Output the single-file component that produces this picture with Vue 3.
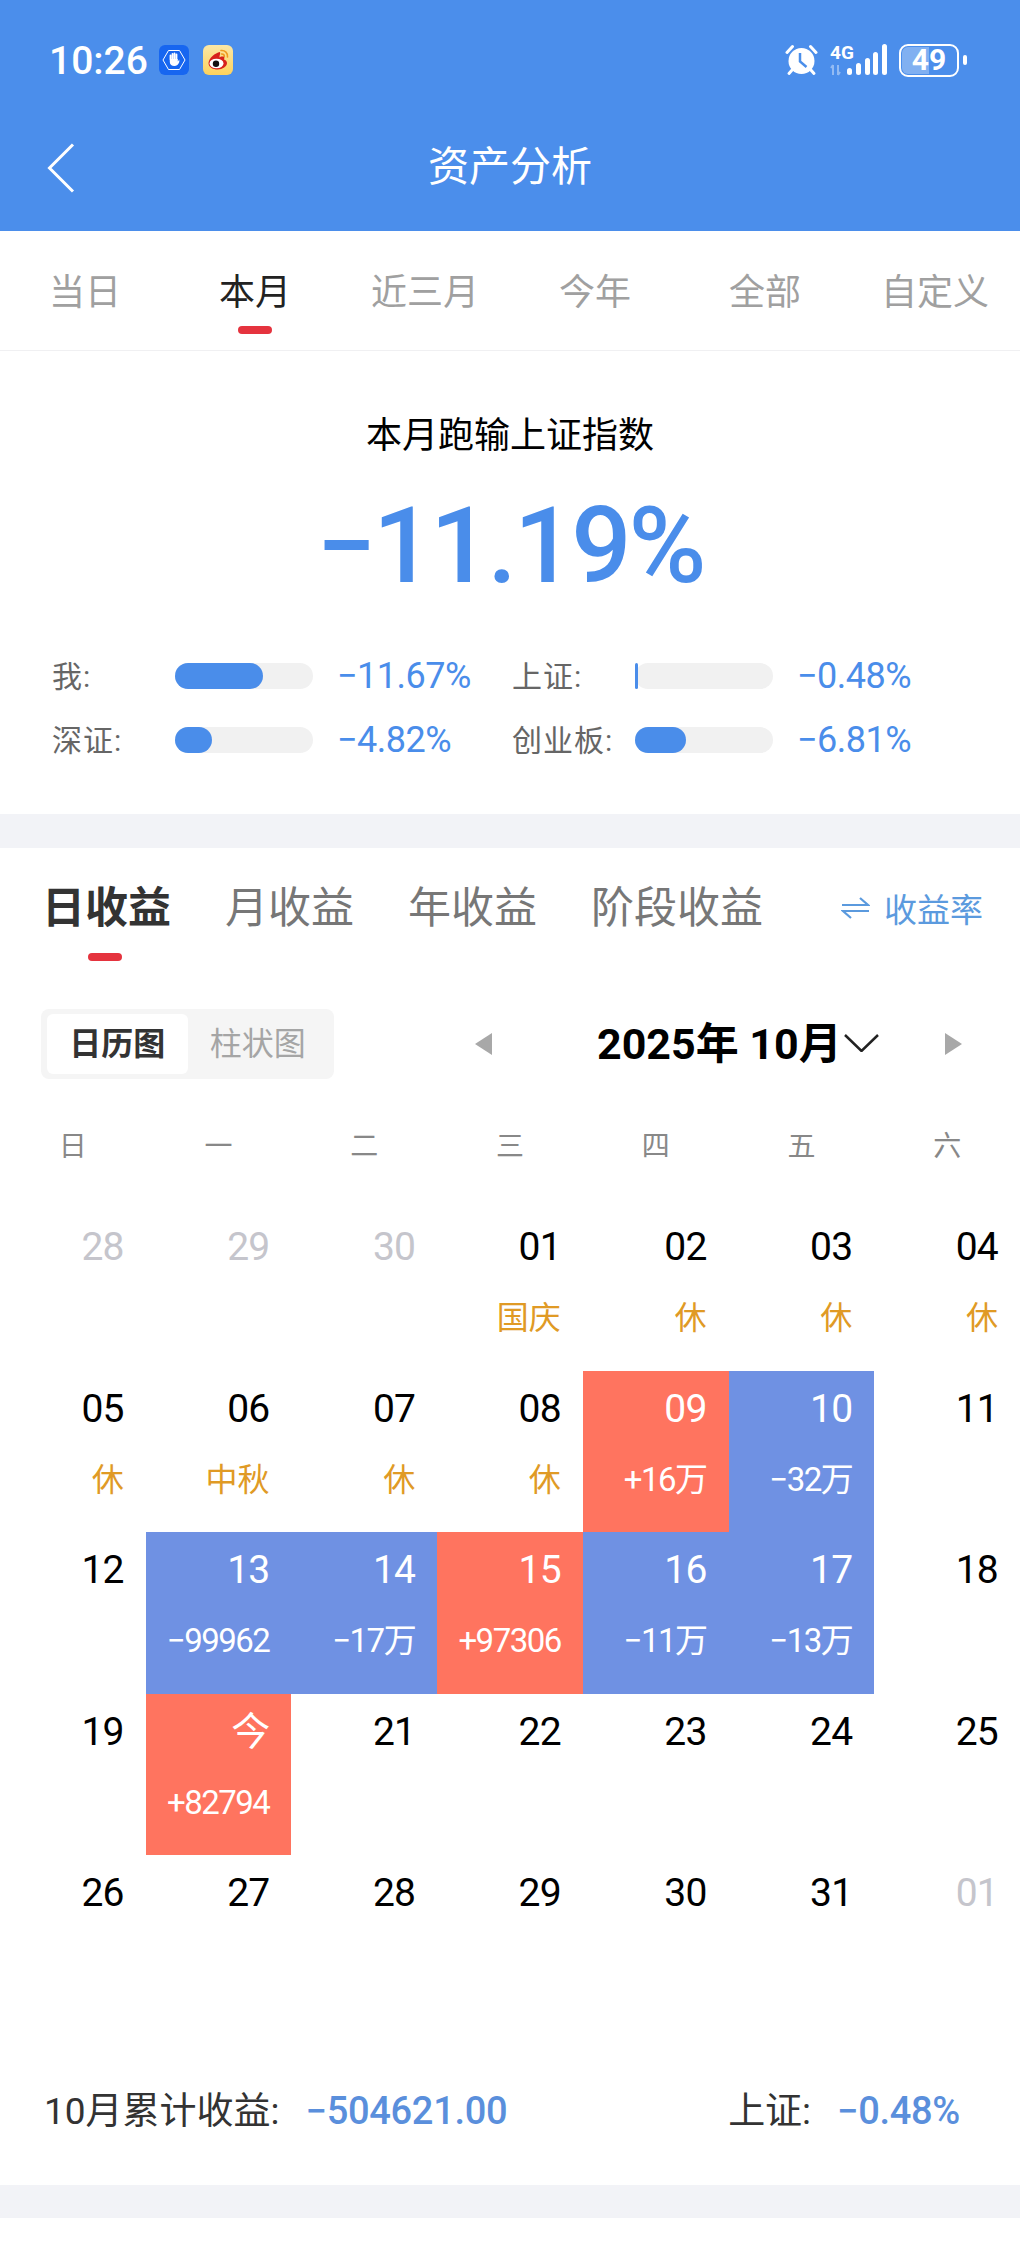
<script setup>
const rangeTabs = ['当日', '本月', '近三月', '今年', '全部', '自定义']
const weekDays = ['日', '一', '二', '三', '四', '五', '六']
const profitTabs = ['日收益', '月收益', '年收益', '阶段收益']

const compare = [
  { label: '我:', pct: 64, value: '−11.67%' },
  { label: '上证:', pct: 2.4, value: '−0.48%' },
  { label: '深证:', pct: 27, value: '−4.82%' },
  { label: '创业板:', pct: 37, value: '−6.81%' },
]

const days = [
  { d: '28', off: true }, { d: '29', off: true }, { d: '30', off: true },
  { d: '01', note: '国庆' }, { d: '02', note: '休' }, { d: '03', note: '休' }, { d: '04', note: '休' },
  { d: '05', note: '休' }, { d: '06', note: '中秋' }, { d: '07', note: '休' }, { d: '08', note: '休' },
  { d: '09', gain: '+16万', up: true }, { d: '10', gain: '−32万' }, { d: '11' },
  { d: '12' }, { d: '13', gain: '−99962' }, { d: '14', gain: '−17万' }, { d: '15', gain: '+97306', up: true },
  { d: '16', gain: '−11万' }, { d: '17', gain: '−13万' }, { d: '18' },
  { d: '19' }, { d: '今', gain: '+82794', up: true }, { d: '21' }, { d: '22' }, { d: '23' }, { d: '24' }, { d: '25' },
  { d: '26' }, { d: '27' }, { d: '28' }, { d: '29' }, { d: '30' }, { d: '31' }, { d: '01', off: true },
]
</script>

<template>
  <div class="page">
    <header class="header">
      <div class="status">
        <span class="time">10:26</span>
        <svg class="app-icon first" viewBox="0 0 30 30">
          <rect width="30" height="30" rx="6" fill="#1766f0" />
          <path d="M9.500 5.500h11L26 15l-5.500 9.500h-11L4 15z" fill="none" stroke="#fff" stroke-width="1" />
          <path d="M11.500 14v-3.500M13.500 14V9M15.500 14V8.500M17.500 14V9.500" stroke="#fff" stroke-width="1.800" stroke-linecap="round" />
          <path d="M10.800 14h8v2.500l1.500-2v2.500c-1 2.500-2.500 4-5 4s-4.500-1.500-4.500-4z" fill="#fff" />
        </svg>
        <svg class="app-icon" viewBox="0 0 30 30">
          <defs>
            <linearGradient id="wb" x1="0" y1="0" x2="0" y2="1">
              <stop offset="0" stop-color="#fbe7a6" />
              <stop offset="1" stop-color="#fdd25c" />
            </linearGradient>
          </defs>
          <rect width="30" height="30" rx="6" fill="url(#wb)" />
          <path d="M18 5.500c4 -.5 7 2.500 6.500 6.500M18.500 9c2 -.2 3 1 2.800 2.800" fill="none" stroke="#ef9a1f" stroke-width="1.600" stroke-linecap="round" />
          <path d="M17 7c-5 1-11 6-11.500 11 0 4.500 5 6.500 9 6.500 5 0 9.500-3 9.500-6.500 0-2-1.500-3-3-3.500.5-1.500.5-3-1-3-1.500-.3-3 .5-3.500 1 0-2.500 1-3.500.5-5.500z" fill="#d7201c" />
          <ellipse cx="13.500" cy="18.500" rx="7" ry="4.800" fill="#fff" />
          <circle cx="13" cy="18.800" r="3.200" fill="#111" />
        </svg>
        <span class="spacer"></span>
        <svg class="alarm" viewBox="0 0 33 32">
          <path d="M2 8.500 7.500 2.500M31 8.500 25.500 2.500" stroke="#fff" stroke-width="3" stroke-linecap="round" />
          <path d="M8 25l-4 4.500M25 25l4 4.500" stroke="#fff" stroke-width="3" stroke-linecap="round" />
          <circle cx="16.500" cy="17" r="13" fill="#fff" />
          <path d="M15 9v8.500l6.500 5.500" fill="none" stroke="#4a8eea" stroke-width="2.500" />
        </svg>
        <svg class="signal" viewBox="0 0 57 32">
          <text x="0" y="15" class="net">4G</text>
          <path d="M3 21v10M3 21l-2 3M8 31V21M8 31l2-3" stroke="#fff" stroke-opacity=".4" stroke-width="2" fill="none" />
          <rect x="17" y="24" width="5" height="7" rx="2.500" fill="#fff" />
          <rect x="26" y="19" width="5" height="12" rx="2.500" fill="#fff" />
          <rect x="35" y="14" width="5" height="17" rx="2.500" fill="#fff" />
          <rect x="43" y="8" width="5" height="23" rx="2.500" fill="#fff" />
          <rect x="52" y="0" width="5" height="31" rx="2.500" fill="#fff" />
        </svg>
        <div class="battery">
          <div class="battery-level"></div>
          <span class="battery-text">49</span>
        </div>
        <span class="battery-nub"></span>
      </div>
      <div class="titlebar">
        <svg class="back" viewBox="0 0 28 50">
          <path d="M26 1.500 2.500 25 26 48.500" fill="none" stroke="#fff" stroke-width="3" />
        </svg>
        <span class="title">资产分析</span>
      </div>
    </header>

    <nav class="range-tabs">
      <div v-for="t in rangeTabs" :key="t" class="range-tab" :class="{ active: t === '本月' }">
        <span>{{ t }}</span>
        <i class="mark"></i>
      </div>
    </nav>

    <section class="summary">
      <div class="summary-title">本月跑输上证指数</div>
      <div class="summary-big">−11.19%</div>
      <div class="compare">
        <div v-for="c in compare" :key="c.label" class="compare-item">
          <span class="compare-label">{{ c.label }}</span>
          <div class="bar">
            <div class="bar-fill" :style="{ width: c.pct + '%' }"></div>
          </div>
          <span class="compare-value">{{ c.value }}</span>
        </div>
      </div>
    </section>

    <div class="band"></div>

    <section class="profit">
      <div class="profit-tabs">
        <div v-for="t in profitTabs" :key="t" class="profit-tab" :class="{ active: t === '日收益' }">{{ t }}</div>
        <div class="rate">
          <svg class="rate-icon" viewBox="0 0 29 24">
            <path d="M1 9h26L19 2M28 15H2l8 7" fill="none" stroke="#5b9ade" stroke-width="2.200" />
          </svg>
          <span>收益率</span>
        </div>
      </div>
      <i class="profit-mark"></i>

      <div class="toolbar">
        <div class="segment">
          <span class="seg active">日历图</span>
          <span class="seg">柱状图</span>
        </div>
        <i class="tri left"></i>
        <span class="month">2025年 10月</span>
        <svg class="chevron" viewBox="0 0 35 18">
          <path d="M1 1l16.500 16L34 1" fill="none" stroke="#222" stroke-width="2.500" />
        </svg>
        <i class="tri right"></i>
      </div>

      <div class="weekdays">
        <span v-for="w in weekDays" :key="w">{{ w }}</span>
      </div>

      <div class="calendar">
        <div
          v-for="(c, i) in days"
          :key="i"
          class="cell"
          :class="{ off: c.off, win: c.gain && c.up, lose: c.gain && !c.up }"
        >
          <span class="date">{{ c.d }}</span>
          <span v-if="c.note" class="note">{{ c.note }}</span>
          <span v-if="c.gain" class="gain">{{ c.gain }}</span>
        </div>
      </div>

      <div class="total">
        <div>10月累计收益:<span class="total-value">−504621.00</span></div>
        <div>上证:<span class="total-value">−0.48%</span></div>
      </div>
    </section>

    <div class="band last"></div>
  </div>
</template>

<style>
html,
body {
  background: #fff;
}
</style>

<style scoped>
.page {
  width: 1020px;
  height: 2250px;
  overflow: hidden;
  background: #fff;
  font-family: Roboto, 'Noto Sans CJK SC', sans-serif;
  color: #000;
}

.header {
  height: 231px;
  background: #4b8eeb;
  color: #fff;
}

.status {
  display: flex;
  align-items: center;
  height: 34px;
  padding: 43px 53px 0 49px;
}

.time {
  font-size: 39px;
  font-weight: 500;
  line-height: 34px;
  position: relative;
  top: 1px;
}

.app-icon {
  width: 30px;
  height: 30px;
  margin-left: 14px;
}

.app-icon.first {
  margin-left: 11px;
}

.spacer {
  flex: 1;
}

.alarm {
  width: 33px;
  height: 32px;
}

.signal {
  width: 57px;
  height: 32px;
  margin-left: 12px;
  overflow: visible;
}

.net {
  font-size: 19px;
  font-weight: 700;
  fill: #fff;
}

.battery {
  position: relative;
  width: 60px;
  height: 33px;
  margin-left: 12px;
  box-sizing: border-box;
  border: 2.5px solid #fff;
  border-radius: 9px;
  display: flex;
  align-items: center;
  justify-content: center;
}

.battery-level {
  position: absolute;
  left: 1px;
  top: 1px;
  bottom: 1px;
  width: 49%;
  border-radius: 6px 0 0 6px;
  background: rgba(255, 255, 255, 0.3);
}

.battery-text {
  position: relative;
  font-size: 30px;
  font-weight: 700;
  line-height: 28px;
}

.battery-nub {
  width: 4px;
  height: 10px;
  margin-left: 4px;
  border-radius: 2px;
  background: #fff;
}

.titlebar {
  position: relative;
  height: 60px;
  margin-top: 60px;
  text-align: center;
}

.back {
  position: absolute;
  left: 47px;
  top: 6px;
  width: 28px;
  height: 50px;
}

.title {
  font-size: 41px;
  line-height: 60px;
}

.range-tabs {
  display: grid;
  grid-template-columns: repeat(6, 1fr);
  height: 119px;
  border-bottom: 1px solid #f0f0f2;
}

.range-tab {
  display: flex;
  flex-direction: column;
  align-items: center;
  padding-top: 41px;
  font-size: 36px;
  line-height: 42px;
  color: #a0a0a0;
}

.range-tab.active {
  color: #222;
}

.mark {
  display: block;
  width: 34px;
  height: 8px;
  margin-top: 12px;
  border-radius: 4px;
}

.range-tab.active .mark {
  background: #e5333e;
}

.summary {
  height: 463px;
  box-sizing: border-box;
  padding-top: 60px;
  text-align: center;
}

.summary-title {
  font-size: 36px;
  line-height: 50px;
}

.summary-big {
  margin-top: 25px;
  font-size: 106px;
  font-weight: 500;
  line-height: 120px;
  color: #4a8dea;
  letter-spacing: -3px;
}

.compare {
  display: grid;
  grid-template-columns: 460px 1fr;
  grid-auto-rows: 64px;
  margin-top: 38px;
  padding-left: 52px;
  text-align: left;
}

.compare-item {
  display: flex;
  align-items: center;
}

.compare-label {
  width: 123px;
  padding-bottom: 5px;
  font-size: 30px;
  letter-spacing: 1px;
  color: #666;
}

.bar {
  width: 138px;
  height: 26px;
  border-radius: 13px;
  background: #f1f1f1;
}

.bar-fill {
  height: 100%;
  border-radius: 13px;
  background: #4a8dea;
}

.compare-value {
  margin-left: 24px;
  font-size: 36px;
  color: #4a8dea;
  letter-spacing: -0.5px;
}

.band {
  height: 34px;
  background: #f2f3f7;
}

.band.last {
  height: 33px;
  margin-top: 0;
}

.profit {
  height: 1337px;
}

.profit-tabs {
  display: flex;
  align-items: center;
  gap: 54px;
  height: 60px;
  padding: 30px 37px 0 42px;
}

.profit-tab {
  font-size: 43px;
  line-height: 60px;
  color: #777;
}

.profit-tab.active {
  color: #333;
  font-weight: 700;
}

.rate {
  display: flex;
  align-items: center;
  margin-left: auto;
  font-size: 33px;
  color: #5b9ade;
}

.rate-icon {
  width: 29px;
  height: 24px;
  margin-right: 14px;
}

.profit-mark {
  display: block;
  width: 34px;
  height: 8px;
  margin: 15px 0 0 88px;
  border-radius: 4px;
  background: #e5333e;
}

.toolbar {
  display: flex;
  align-items: center;
  height: 70px;
  margin-top: 48px;
  padding-left: 41px;
}

.segment {
  display: flex;
  align-items: center;
  box-sizing: border-box;
  width: 293px;
  height: 70px;
  padding: 0 6px;
  border-radius: 8px;
  background: #f5f5f5;
}

.seg {
  width: 141px;
  height: 60px;
  border-radius: 6px;
  font-size: 32px;
  line-height: 60px;
  text-align: center;
  color: #a5a5a5;
}

.seg.active {
  background: #fff;
  color: #333;
  font-weight: 700;
}

.tri {
  display: block;
  width: 0;
  height: 0;
  border-top: 11px solid transparent;
  border-bottom: 11px solid transparent;
}

.tri.left {
  margin-left: 141px;
  border-right: 17px solid #a8a8a8;
}

.tri.right {
  margin-left: 66px;
  border-left: 17px solid #a8a8a8;
}

.month {
  margin-left: 105px;
  font-size: 43px;
  font-weight: 700;
  line-height: 60px;
  white-space: nowrap;
}

.chevron {
  width: 35px;
  height: 18px;
  margin: -2px 0 0 2px;
}

.weekdays {
  display: grid;
  grid-template-columns: repeat(7, 1fr);
  height: 60px;
  margin-top: 38px;
  font-size: 28px;
  line-height: 60px;
  text-align: center;
  color: #888;
}

.calendar {
  display: grid;
  grid-template-columns: repeat(7, 1fr);
  grid-auto-rows: 161.6px;
  margin-top: 32px;
}

.cell {
  display: flex;
  flex-direction: column;
  align-items: flex-end;
  padding: 14px 22px 0 0;
}

.date {
  font-size: 39px;
  line-height: 48px;
  letter-spacing: -0.8px;
}

.note,
.gain {
  margin-top: 23px;
  font-size: 32px;
  line-height: 48px;
  white-space: nowrap;
}

.note {
  color: #e09a25;
}

.gain {
  font-size: 33px;
  letter-spacing: -1.5px;
}

.cell.off {
  color: #c5c5cc;
}

.cell.win {
  background: #ff745f;
  color: #fff;
}

.cell.lose {
  background: #6f91e3;
  color: #fff;
}

.total {
  display: flex;
  justify-content: space-between;
  margin-top: 69px;
  padding: 0 60px 0 44px;
  font-size: 37px;
  line-height: 50px;
  color: #333;
}

.total-value {
  margin-left: 26px;
  font-size: 38px;
  font-weight: 500;
  letter-spacing: -0.3px;
  color: #5a8fdc;
}
</style>
